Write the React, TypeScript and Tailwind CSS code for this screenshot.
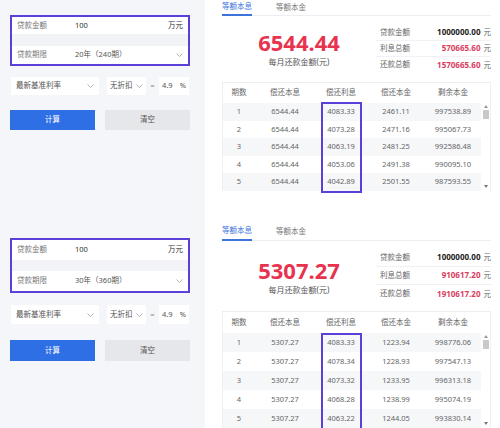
import React from 'react'

type Row = [string, string, string, string, string]

interface CalcProps {
  tall?: boolean
  term: string
  monthly: string
  interest: string
  total: string
  rows: Row[]
}

const Chevron = () => (
  <svg width="7" height="4" viewBox="0 0 7 4" fill="none">
    <path d="M0.5 0.5L3.5 3.5L6.5 0.5" stroke="#9aa0aa" strokeWidth="0.8" />
  </svg>
)

function Calculator({ tall = false, term, monthly, interest, total, rows }: CalcProps) {
  const fieldH = tall ? 'h-[20px]' : 'h-[17px]'
  const field2H = tall ? 'h-[20px]' : 'h-[18px]'
  const rowH = tall ? 'h-[19px]' : 'h-[17.5px]'

  return (
    <div className={`flex w-full ${tall ? 'h-[216px]' : 'h-[212px]'}`}>
      {/* 左侧输入 */}
      <div className={`w-[205px] shrink-0 bg-[#f5f6fa] pl-[10px] ${tall ? 'pt-[26px]' : 'pt-[15px]'}`}>
        <div className="w-[180px] border-2 border-[#5a3fd8] text-[7.5px]">
          <div className={`flex items-center bg-white px-[5px] ${fieldH}`}>
            <span className="w-[58px] text-[#777]">贷款金额</span>
            <span className="flex-1 text-[#333]">100</span>
            <span className="text-[#333]">万元</span>
          </div>
          <div className={`bg-[#f2f3f7] ${tall ? 'h-[11px]' : 'h-[12px]'}`} />
          <div className={`flex items-center bg-white px-[5px] ${field2H}`}>
            <span className="w-[58px] text-[#777]">贷款期限</span>
            <span className="flex-1 text-[#555]">{term}</span>
            <Chevron />
          </div>
        </div>

        <div className={`flex items-center pl-[1px] text-[7.5px] text-[#555] ${tall ? 'mt-[12px] h-[19px]' : 'mt-[11px] h-[18px]'}`}>
          <div className="flex h-full w-[88px] items-center justify-between bg-white px-[5px]">
            最新基准利率
            <Chevron />
          </div>
          <div className="ml-[8px] flex h-full w-[39px] items-center gap-[3px] bg-white pl-[3px]">
            无折扣
            <Chevron />
          </div>
          <span className="w-[13px] text-center text-[#888]">=</span>
          <div className="flex h-full w-[30px] items-center justify-between bg-white px-[3px]">
            <span>4.9</span>
            <span>%</span>
          </div>
        </div>

        <div className={`flex gap-[10px] text-[7.5px] ${tall ? 'mt-[16px] h-[21px]' : 'mt-[15px] h-[20px]'}`}>
          <button className="w-[85px] bg-[#2f6fe6] text-white">计算</button>
          <button className="w-[85px] bg-[#e6e7eb] text-[#555]">清空</button>
        </div>
      </div>

      {/* 右侧结果 */}
      <div className={`flex-1 bg-white pl-[17px] pr-[10px] ${tall ? 'pt-[11px]' : ''}`}>
        <div className={`flex border-b border-[#eceef2] text-[7.5px] ${tall ? 'h-[18px]' : 'h-[16px]'}`}>
          <div className="-mb-px flex w-[30px] items-center justify-center border-b-2 border-[#3d74db] text-[#3d74db]">
            等额本息
          </div>
          <div className="ml-[24px] flex items-center text-[#777]">等额本金</div>
        </div>

        <div className={`flex border-b border-[#eceef2] ${tall ? 'h-[71px]' : 'h-[67px]'}`}>
          <div className={`flex flex-1 flex-col items-center ${tall ? 'pt-[14px]' : 'pt-[11px]'}`}>
            <div className="text-[22px] font-bold leading-[30px] text-[#e8334f]">{monthly}</div>
            <div className="text-[8px] leading-[10px] text-[#555]">每月还款金额(元)</div>
          </div>
          <div className={`w-[115px] text-[7.5px] ${tall ? 'pt-[8px]' : 'pt-[9px]'}`}>
            {[
              ['贷款金额', '1000000.00', 'text-[#222]'],
              ['利息总额', interest, 'text-[#d9405f]'],
              ['还款总额', total, 'text-[#d9405f]'],
            ].map(([label, value, color], i) => (
              <div
                key={label}
                className={`flex items-center justify-between pl-[4px] ${tall ? 'h-[18px]' : 'h-[16px]'} ${i < 2 ? 'border-b border-[#f0f1f4]' : ''}`}>
                <span className="text-[#666]">{label}</span>
                <span>
                  <span className={`text-[8px] font-bold ${color}`}>{value}</span>
                  <span className="ml-[3px] text-[#666]">元</span>
                </span>
              </div>
            ))}
          </div>
        </div>

        {/* 还款明细 */}
        <div className="border-x border-[#eef0f3] text-[7.5px] text-[#666]">
          <div className={`grid grid-cols-[32px_60px_52px_58px_56px_1fr] items-center text-center ${tall ? 'h-[21px]' : 'h-[20px]'}`}>
            <span>期数</span>
            <span>偿还本息</span>
            <span>偿还利息</span>
            <span>偿还本金</span>
            <span>剩余本金</span>
            <span />
          </div>
          <div className="relative flex">
            <div className="flex-1">
              {rows.map((r, i) => (
                <div
                  key={r[0]}
                  className={`grid grid-cols-[32px_60px_52px_58px_56px] items-center text-center ${rowH} ${i % 2 === 0 ? 'bg-[#f6f7f9]' : 'bg-white'}`}>
                  {r.map((c, j) => (
                    <span key={j}>{c}</span>
                  ))}
                </div>
              ))}
            </div>
            <div className="flex w-[9px] flex-col items-center bg-white pt-[2px]">
              <svg width="4" height="3" viewBox="0 0 4 3"><path d="M0 3L2 0L4 3Z" fill="#999" /></svg>
              <div className="mt-[2px] h-[9px] w-[6px] bg-[#c9c9cc]" />
              <div className="flex-1" />
              <svg width="4" height="3" viewBox="0 0 4 3" className="mb-[3px]"><path d="M0 0L2 3L4 0Z" fill="#777" /></svg>
            </div>
            <div className={`absolute left-[98px] w-[41px] border-2 border-[#5a3fd8] ${tall ? 'top-0 bottom-[-4px]' : 'top-[-1px] bottom-[-2px]'}`} />
          </div>
        </div>
      </div>
    </div>
  )
}

export default function App() {
  return (
    <div className="h-[428px] w-[500px] overflow-hidden bg-white font-['Noto_Sans','Noto_Sans_CJK_SC',sans-serif]">
      <Calculator
        term="20年（240期）"
        monthly="6544.44"
        interest="570665.60"
        total="1570665.60"
        rows={[
          ['1', '6544.44', '4083.33', '2461.11', '997538.89'],
          ['2', '6544.44', '4073.28', '2471.16', '995067.73'],
          ['3', '6544.44', '4063.19', '2481.25', '992586.48'],
          ['4', '6544.44', '4053.06', '2491.38', '990095.10'],
          ['5', '6544.44', '4042.89', '2501.55', '987593.55'],
        ]}
      />
      <Calculator
        tall
        term="30年（360期）"
        monthly="5307.27"
        interest="910617.20"
        total="1910617.20"
        rows={[
          ['1', '5307.27', '4083.33', '1223.94', '998776.06'],
          ['2', '5307.27', '4078.34', '1228.93', '997547.13'],
          ['3', '5307.27', '4073.32', '1233.95', '996313.18'],
          ['4', '5307.27', '4068.28', '1238.99', '995074.19'],
          ['5', '5307.27', '4063.22', '1244.05', '993830.14'],
        ]}
      />
    </div>
  )
}
